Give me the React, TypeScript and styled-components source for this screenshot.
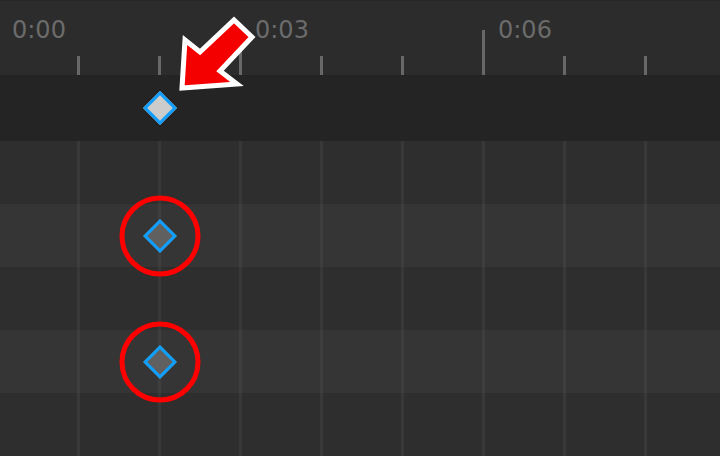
import React from "react";
import styled, { createGlobalStyle } from "styled-components";

const GlobalStyle = createGlobalStyle`
  html, body {
    margin: 0;
    padding: 0;
    background: #2e2e2e;
  }
  body {
    font-family: "DejaVu Sans", sans-serif;
    overflow: hidden;
  }
`;

const STEP = 81;

const Editor = styled.div`
  position: relative;
  width: 720px;
  height: 456px;
  overflow: hidden;
  display: flex;
  flex-direction: column;
  background: #2e2e2e;
`;

const Ruler = styled.div`
  height: 75px;
  flex: none;
  display: flex;
  margin-left: -4px;
  background: #2c2c2c;
  border-top: 1px solid #272727;
  box-sizing: border-box;
`;

const TickCell = styled.div`
  flex: none;
  width: ${STEP}px;
  display: flex;
  align-items: flex-end;
`;

const Tick = styled.div<{ $major?: boolean }>`
  flex: none;
  width: 3px;
  height: ${(p) => (p.$major ? 45 : 19)}px;
  background: #686868;
`;

const Label = styled.span`
  align-self: flex-start;
  margin: 14px 0 0 13px;
  font-size: 24px;
  line-height: 30px;
  color: #6b6b6b;
  white-space: nowrap;
`;

const SummaryRow = styled.div`
  position: relative;
  height: 66px;
  flex: none;
  background: #242424;
`;

const TrackRow = styled.div<{ $light?: boolean }>`
  position: relative;
  height: 63px;
  flex: none;
  background-color: ${(p) => (p.$light ? "#353535" : "#2e2e2e")};
  background-image: repeating-linear-gradient(
    90deg,
    transparent 0 77px,
    ${(p) => (p.$light ? "#3e3e3e" : "#383838")} 77px 80px,
    transparent 80px ${STEP}px
  );
`;

const Keyframe = styled.div<{ $x: number; $selected?: boolean }>`
  position: absolute;
  left: ${(p) => p.$x}px;
  top: 50%;
  width: 18px;
  height: 18px;
  border: 3px solid #0fa0ff;
  background: ${(p) => (p.$selected ? "#cccccc" : "#606060")};
  transform: translate(-50%, -50%) rotate(45deg);
`;

const Highlight = styled.div<{ $x: number }>`
  position: absolute;
  z-index: 2;
  left: ${(p) => p.$x}px;
  top: 50%;
  width: 71px;
  height: 71px;
  border: 5px solid #ff0000;
  border-radius: 50%;
  transform: translate(-50%, -50%);
`;

const Pointer = styled.svg`
  position: absolute;
  z-index: 3;
  left: 0;
  top: 0;
  pointer-events: none;
`;

const ticks = Array.from({ length: 10 }, (_, i) => i);
const labels: Record<number, string> = { 0: "0:00", 3: "0:03", 6: "0:06" };

const App: React.FC = () => {
  return (
    <Editor>
      <GlobalStyle />
      <Ruler>
        {ticks.map((i) => (
          <TickCell key={i}>
            <Tick $major={i % 3 === 0} />
            {labels[i] && <Label>{labels[i]}</Label>}
          </TickCell>
        ))}
      </Ruler>

      <SummaryRow>
        <Keyframe $x={159.5} $selected />
      </SummaryRow>
      <TrackRow />
      <TrackRow $light>
        <Keyframe $x={159.5} />
        <Highlight $x={159.5} />
      </TrackRow>
      <TrackRow />
      <TrackRow $light>
        <Keyframe $x={159.5} />
        <Highlight $x={159.5} />
      </TrackRow>
      <TrackRow />

      <Pointer width="720" height="456" viewBox="0 0 720 456">
        <polygon
          points="182,88 185,40 200,52 234,20 252,37 220,71 237,84"
          fill="#f50000"
          stroke="#ffffff"
          strokeWidth="5"
          strokeLinejoin="miter"
        />
      </Pointer>
    </Editor>
  );
};

export default App;
